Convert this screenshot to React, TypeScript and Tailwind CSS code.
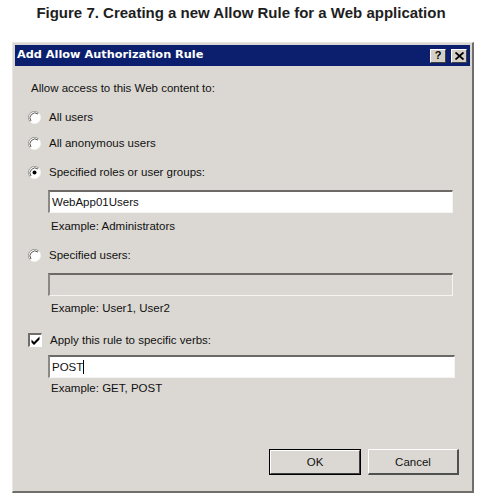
import React from "react";

const Radio = ({ checked }: { checked?: boolean }) => (
  <svg width="13" height="13" viewBox="0 0 13 13" className="shrink-0">
    <circle cx="6.5" cy="6.5" r="6" fill="#ffffff" />
    <path d="M2.2 10.8 A6 6 0 0 1 10.8 2.2" fill="none" stroke="#9a9894" strokeWidth="1" />
    <path d="M3 10 A5 5 0 0 1 10 3" fill="none" stroke="#5a5955" strokeWidth="1" />
    <path d="M10.8 2.2 A6 6 0 0 1 2.2 10.8" fill="none" stroke="#f4f3f0" strokeWidth="1" />
    {checked && <circle cx="6.5" cy="6.5" r="2" fill="#000000" />}
  </svg>
);

const Checkbox = () => (
  <div className="w-[14px] h-[14px] shrink-0 bg-white border-t-2 border-l-2 border-t-[#6f6e6a] border-l-[#6f6e6a] border-b border-r border-b-white border-r-white relative">
    <svg width="11" height="11" viewBox="0 0 11 11" className="absolute left-0 top-0">
      <path d="M1.5 4.5 L4 7 L9.5 1.5 L9.5 4.5 L4 10 L1.5 7.5 Z" fill="#000000" />
    </svg>
  </div>
);

const TextBox = ({
  value,
  disabled,
  width,
  caret,
}: {
  value?: string;
  disabled?: boolean;
  width: string;
  caret?: boolean;
}) => (
  <div
    className={`${width} h-[23px] border-t-2 border-l-2 border-t-[#6b6a66] border-l-[#8a8985] border-b border-r border-b-[#f5f4f1] border-r-[#f5f4f1] flex items-center pl-[2px] ${
      disabled ? "bg-[#dbd8d3]" : "bg-white"
    }`}
  >
    {value}
    {caret && <span className="inline-block w-px h-[14px] bg-black" />}
  </div>
);

const Option = ({ label, checked }: { label: string; checked?: boolean }) => (
  <div className="flex items-center h-[16px] ml-[11px]">
    <Radio checked={checked} />
    <span className="ml-[8px]">{label}</span>
  </div>
);

export default function App() {
  return (
    <div
      className="w-[482px] h-[497px] bg-white overflow-hidden text-[#111]"
      style={{ fontFamily: '"Liberation Sans", Arial, sans-serif' }}
    >
      <div className="pt-[3px] text-center text-[15px] font-bold leading-[20px] text-[#1e1e1e]">
        Figure 7. Creating a new Allow Rule for a Web application
      </div>
      <div className="ml-[12px] mt-[19px] w-[462px] h-[451px] bg-[#dbd8d3] border-t border-l border-t-[#e8e6e2] border-l-[#e8e6e2] border-r-2 border-b-2 border-r-[#6f6e6a] border-b-[#6f6e6a] p-[2px] flex flex-col">
        <div className="h-[21px] bg-[#0b1f6e] flex items-center justify-between pl-[2px] pr-[3px]">
          <span
            className="text-white text-[11.3px] font-bold"
            style={{ fontFamily: '"DejaVu Sans", Tahoma, sans-serif' }}
          >
            Add Allow Authorization Rule
          </span>
          <div className="flex gap-[5px]">
            <div className="w-[16px] h-[14px] bg-[#d4d0c8] border-t border-l border-t-white border-l-white border-b border-r border-b-[#404040] border-r-[#404040] flex items-center justify-center text-[11px] font-bold leading-none text-black">
              ?
            </div>
            <div className="w-[16px] h-[14px] bg-[#d4d0c8] border-t border-l border-t-white border-l-white border-b border-r border-b-[#404040] border-r-[#404040] flex items-center justify-center">
              <svg width="9" height="8" viewBox="0 0 9 8">
                <path d="M0.5 0.5 L8.5 7.5 M8.5 0.5 L0.5 7.5" stroke="#000" strokeWidth="1.8" fill="none" />
              </svg>
            </div>
          </div>
        </div>
        <div className="flex flex-col text-[11.5px] leading-[16px] pl-[2px]">
          <div className="mt-[14px] ml-[14px] h-[16px]">Allow access to this Web content to:</div>
          <div className="mt-[13px]">
            <Option label="All users" />
          </div>
          <div className="mt-[10px]">
            <Option label="All anonymous users" />
          </div>
          <div className="mt-[13px]">
            <Option label="Specified roles or user groups:" checked />
          </div>
          <div className="mt-[10px] ml-[31px]">
            <TextBox value="WebApp01Users" width="w-[405px]" />
          </div>
          <div className="mt-[5px] ml-[34px] h-[16px]">Example: Administrators</div>
          <div className="mt-[13px]">
            <Option label="Specified users:" />
          </div>
          <div className="mt-[10px] ml-[31px]">
            <TextBox disabled width="w-[405px]" />
          </div>
          <div className="mt-[4px] ml-[34px] h-[16px]">Example: User1, User2</div>
          <div className="mt-[16px] ml-[11px] flex items-center h-[16px]">
            <Checkbox />
            <span className="ml-[8px]">Apply this rule to specific verbs:</span>
          </div>
          <div className="mt-[7px] ml-[31px]">
            <TextBox value="POST" caret width="w-[407px]" />
          </div>
          <div className="mt-[2px] ml-[34px] h-[16px]">Example: GET, POST</div>
          <div className="mt-[53px] flex justify-end gap-[7px] pr-[11px]">
            <div className="w-[92px] h-[26px] border border-black">
              <div className="w-full h-full border-t border-l border-t-white border-l-white border-b border-r border-b-[#404040] border-r-[#404040] flex items-center justify-center bg-[#dbd8d3]">
                OK
              </div>
            </div>
            <div className="w-[91px] h-[26px] border-t border-l border-t-white border-l-white border-b-2 border-r-2 border-b-[#505050] border-r-[#505050] flex items-center justify-center">
              Cancel
            </div>
          </div>
        </div>
      </div>
    </div>
  );
}
